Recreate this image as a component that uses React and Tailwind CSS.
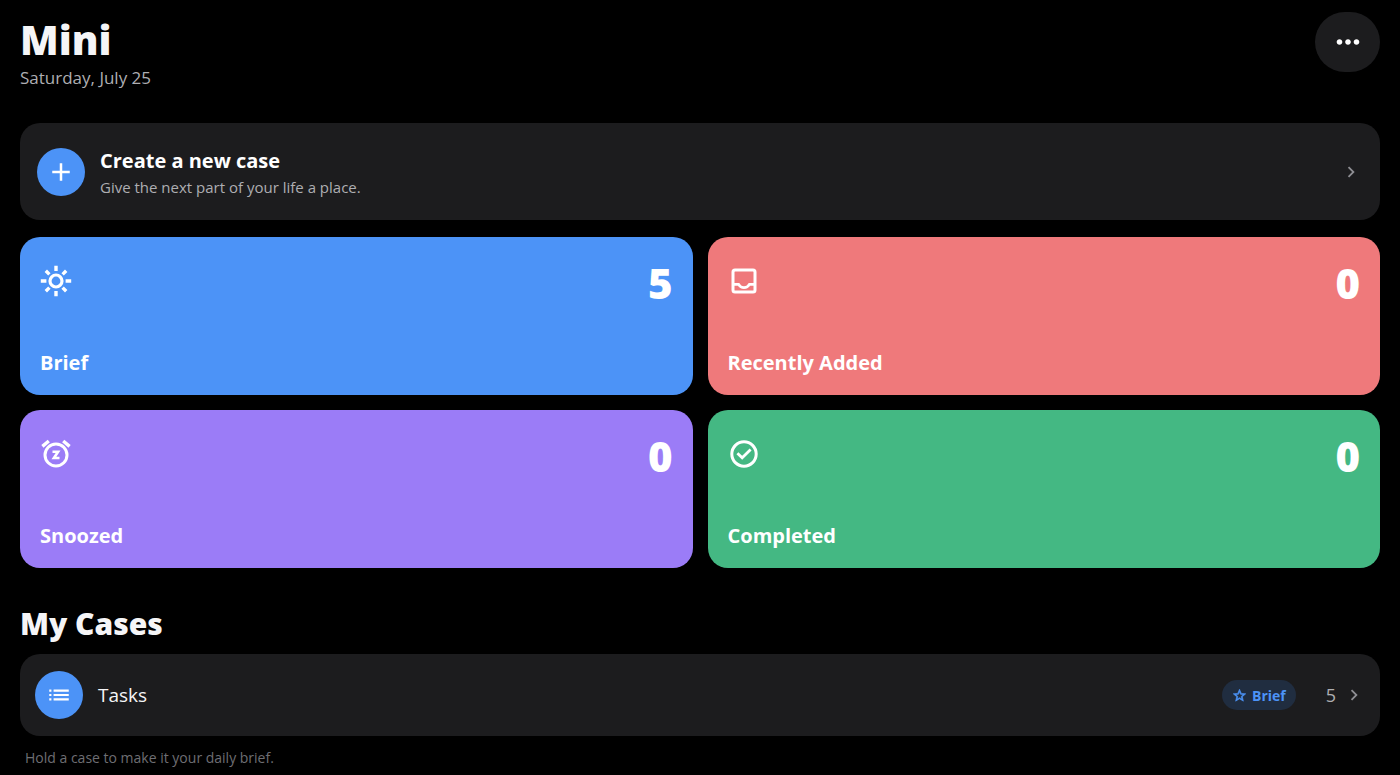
import { MdAdd, MdChevronRight, MdList, MdMoreHoriz, MdStarOutline } from 'react-icons/md';

function SunIcon(props) {
  return (
    <svg viewBox="0 0 32 32" fill="none" stroke="currentColor" strokeWidth="3.2" {...props}>
      <circle cx="16" cy="16" r="6" />
      <path strokeWidth="3.4" d="M16 .8v5.2M16 26v5.2M.8 16H6.4M25.6 16h5.6M5.8 5.8l3.6 3.6M22.6 22.6l3.6 3.6M26.2 5.8l-3.6 3.6M9.4 22.6l-3.6 3.6" />
    </svg>
  );
}

function InboxIcon(props) {
  return (
    <svg viewBox="0 0 32 32" fill="none" stroke="currentColor" strokeWidth="3" {...props}>
      <rect x="5" y="5" width="22" height="22" rx="2" />
      <path strokeWidth="2.8" d="M5 19.4h5.6c1.2 2 3.2 3.2 5.4 3.2s4.2-1.2 5.4-3.2H27" />
    </svg>
  );
}

function SnoozeIcon(props) {
  return (
    <svg viewBox="0 0 32 32" fill="none" stroke="currentColor" strokeWidth="3" {...props}>
      <circle cx="16" cy="17" r="11" />
      <path strokeWidth="3.4" d="M2.4 8.4L8.8 3M29.6 8.4L23.2 3" />
      <path strokeWidth="2.6" d="M12.5 13.7h5.6L13.9 20h5.6" />
    </svg>
  );
}

function CheckIcon(props) {
  return (
    <svg viewBox="0 0 32 32" fill="none" stroke="currentColor" strokeWidth="3" {...props}>
      <circle cx="16" cy="16" r="12.2" />
      <path strokeWidth="2.8" d="M9.4 15.2l4.8 4.6 8.4-8.2" />
    </svg>
  );
}

const tiles = [
  { label: 'Brief', count: 5, icon: SunIcon, color: 'bg-[#4c93f7]' },
  { label: 'Recently Added', count: 0, icon: InboxIcon, color: 'bg-[#ef797b]' },
  { label: 'Snoozed', count: 0, icon: SnoozeIcon, color: 'bg-[#9b7cf7]' },
  { label: 'Completed', count: 0, icon: CheckIcon, color: 'bg-[#44b883]' },
];

const cases = [{ name: 'Tasks', count: 5, isBrief: true }];

function Tile({ label, count, icon: Icon, color }) {
  return (
    <button type="button" className={`${color} flex flex-col rounded-[20px] px-5 pt-6 pb-4 text-left text-white`}>
      <span className="flex w-full items-start justify-between">
        <Icon className="mt-1 size-8" />
        <span className="text-[42px] leading-11 font-black">{count}</span>
      </span>
      <span className="mt-[42px] text-[20px] leading-8 font-bold">{label}</span>
    </button>
  );
}

function CaseRow({ name, count, isBrief }) {
  return (
    <button type="button" className="flex w-full items-center rounded-[20px] bg-[#1c1c1e] py-[17px] pr-[15px] pl-[15px] text-left">
      <span className="flex size-12 items-center justify-center rounded-full bg-[#4c93f7] text-white">
        <MdList className="size-[26px]" />
      </span>
      <span className="ml-[15px] flex-1 text-[19px] text-[#f5f5f7]">{name}</span>
      {isBrief && (
        <span className="flex h-[30px] items-center gap-[5px] rounded-full bg-[#202d40] px-[10px] text-[14px] font-bold text-[#4c93f7]">
          <MdStarOutline className="size-[15px]" stroke="currentColor" strokeWidth="1" />
          Brief
        </span>
      )}
      <span className="ml-[30px] text-[18px] text-[#aeaeb2]">{count}</span>
      <MdChevronRight className="ml-[7px] size-[22px] text-[#8e8e93]" />
    </button>
  );
}

export default function App() {
  return (
    <main className="min-h-screen bg-black px-5 pt-3 pb-1 font-['Open_Sans',sans-serif]">
      <header className="flex items-start justify-between">
        <div className="pt-1">
          <h1 className="text-[40px] leading-12 font-black text-[#f5f5f7]">Mini</h1>
          <p className="mt-[2px] text-[17px] leading-6 text-[#aeaeb2]">Saturday, July 25</p>
        </div>
        <button type="button" aria-label="More" className="flex h-[60px] w-[65px] items-center justify-center rounded-[30px] bg-[#1c1c1e] text-white">
          <MdMoreHoriz className="size-[34px]" />
        </button>
      </header>

      <button type="button" className="mt-[33px] flex w-full items-center rounded-[20px] bg-[#1c1c1e] py-[21px] pr-[18px] pl-[17px] text-left">
        <span className="flex size-12 items-center justify-center rounded-full bg-[#4c93f7] text-white">
          <MdAdd className="size-[30px]" />
        </span>
        <span className="ml-[15px] flex flex-1 flex-col pt-[3px]">
          <span className="text-[20px] leading-7 font-bold text-white">Create a new case</span>
          <span className="text-[15px] leading-6 text-[#aeaeb2]">Give the next part of your life a place.</span>
        </span>
        <MdChevronRight className="size-[22px] text-[#8e8e93]" />
      </button>

      <section className="mt-[17px] grid grid-cols-2 gap-[15px]">
        {tiles.map((tile) => (
          <Tile key={tile.label} {...tile} />
        ))}
      </section>

      <section>
        <h2 className="mt-9 text-[30px] leading-10 font-black text-[#f5f5f7]">My Cases</h2>
        <div className="mt-[10px]">
          {cases.map((item) => (
            <CaseRow key={item.name} {...item} />
          ))}
        </div>
        <p className="mt-[10px] pl-[5px] text-[14px] leading-6 text-[#6e6e73]">Hold a case to make it your daily brief.</p>
      </section>
    </main>
  );
}
